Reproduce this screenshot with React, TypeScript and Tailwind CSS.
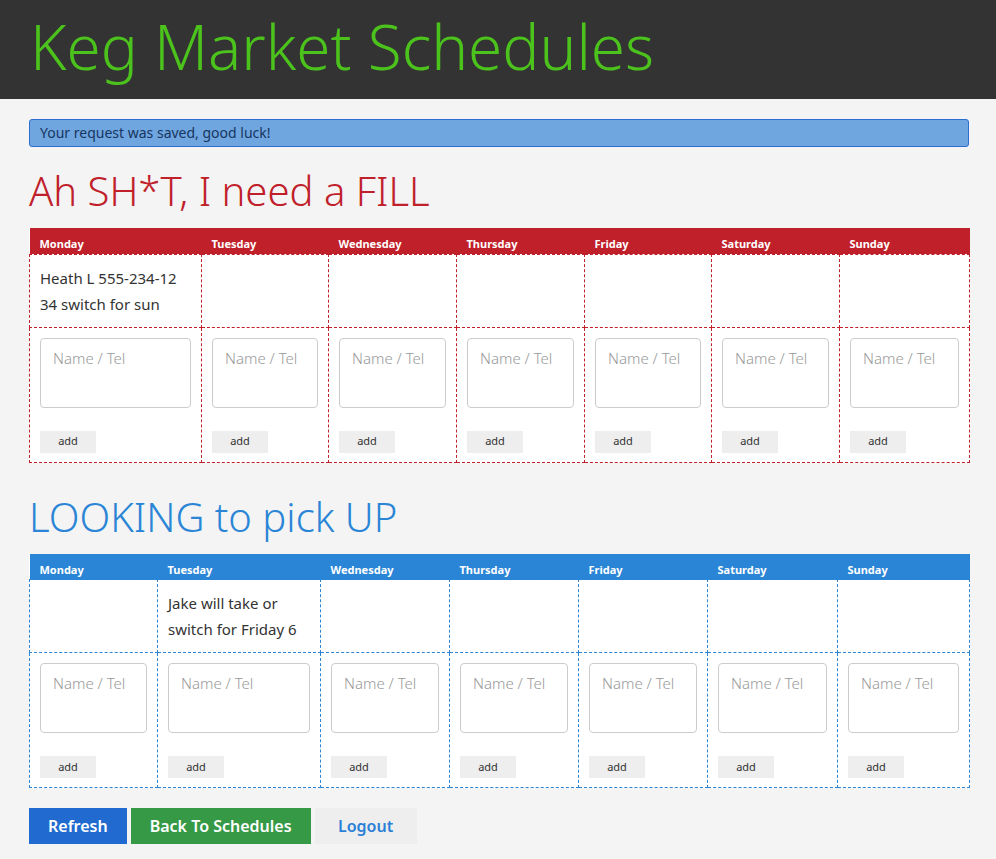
import React from 'react';

const days = ['Monday', 'Tuesday', 'Wednesday', 'Thursday', 'Friday', 'Saturday', 'Sunday'];

type Props = {
  title: string;
  tone: 'red' | 'blue';
  widths: number[];
  entries: Record<number, string[]>;
};

function Schedule({ title, tone, widths, entries }: Props) {
  const red = tone === 'red';
  const border = red ? 'border-[#c0202a]' : 'border-[#2a85d6]';
  return (
    <div>
      <h2
        className={`text-[40px] font-light leading-[48px] mb-[13px] ${red ? 'text-[#c0202a]' : 'text-[#2a85d6]'}`}
      >
        {title}
      </h2>
      <table className="w-[940px] table-fixed border-collapse bg-white">
        <colgroup>
          {widths.map((w, i) => (
            <col key={i} style={{ width: w }} />
          ))}
        </colgroup>
        <thead>
          <tr className={red ? 'bg-[#c0202a]' : 'bg-[#2a85d6]'}>
            {days.map((d) => (
              <th
                key={d}
                className="h-[26px] px-[10px] pt-[7px] text-left align-middle text-[11px] font-bold text-white font-['Liberation_Sans',sans-serif]"
              >
                {d}
              </th>
            ))}
          </tr>
        </thead>
        <tbody>
          <tr>
            {days.map((d, i) => (
              <td key={d} className={`h-[73px] border border-dashed ${border} px-[10px] align-top pt-[10px] text-[15px] leading-[26px] text-[#333]`}>
                {entries[i]?.map((l) => <div key={l}>{l}</div>)}
              </td>
            ))}
          </tr>
          <tr>
            {days.map((d) => (
              <td key={d} className={`h-[135px] border border-dashed ${border} px-[10px] align-top pt-[10px]`}>
                <textarea
                  placeholder="Name / Tel"
                  className="block w-full h-[70px] resize-none rounded border border-[#ccc] px-3 py-2 text-[15px] font-light placeholder:text-[#999] outline-none"
                />
                <button className="mt-[23px] w-[56px] h-[22px] bg-[#eee] text-[11px] text-[#333]">add</button>
              </td>
            ))}
          </tr>
        </tbody>
      </table>
    </div>
  );
}

export default function App() {
  return (
    <div className="min-h-[859px] bg-[#f4f4f4] font-['Open_Sans',sans-serif]">
      <header className="h-[99px] bg-[#333] px-[30px]">
        <h1 className="text-[62px] font-light leading-[92px] text-[#4cc21c]">Keg Market Schedules</h1>
      </header>
      <div className="px-[29px] pt-[20px]">
        <div className="w-[940px] h-[28px] rounded-[3px] border border-[#2a6fcf] bg-[#6fa6e0] px-[10px] text-[14px] leading-[26px] text-[#17355f]">
          Your request was saved, good luck!
        </div>
        <div className="mt-[20px]">
          <Schedule
            title="Ah SH*T, I need a FILL"
            tone="red"
            widths={[172, 127, 128, 128, 127, 128, 130]}
            entries={{ 0: ['Heath L 555-234-12', '34 switch for sun'] }}
          />
        </div>
        <div className="mt-[30px]">
          <Schedule
            title="LOOKING to pick UP"
            tone="blue"
            widths={[128, 163, 129, 129, 129, 130, 132]}
            entries={{ 1: ['Jake will take or', 'switch for Friday 6'] }}
          />
        </div>
        <div className="mt-[20px] flex gap-[4px]">
          <button className="h-[36px] px-[19px] bg-[#216bd0] text-white text-[16px] font-semibold">Refresh</button>
          <button className="h-[36px] px-[19px] bg-[#369946] text-white text-[16px] font-semibold">Back To Schedules</button>
          <button className="h-[36px] w-[102px] bg-[#eee] text-[#2a7fd6] text-[16px] font-semibold">Logout</button>
        </div>
      </div>
    </div>
  );
}
